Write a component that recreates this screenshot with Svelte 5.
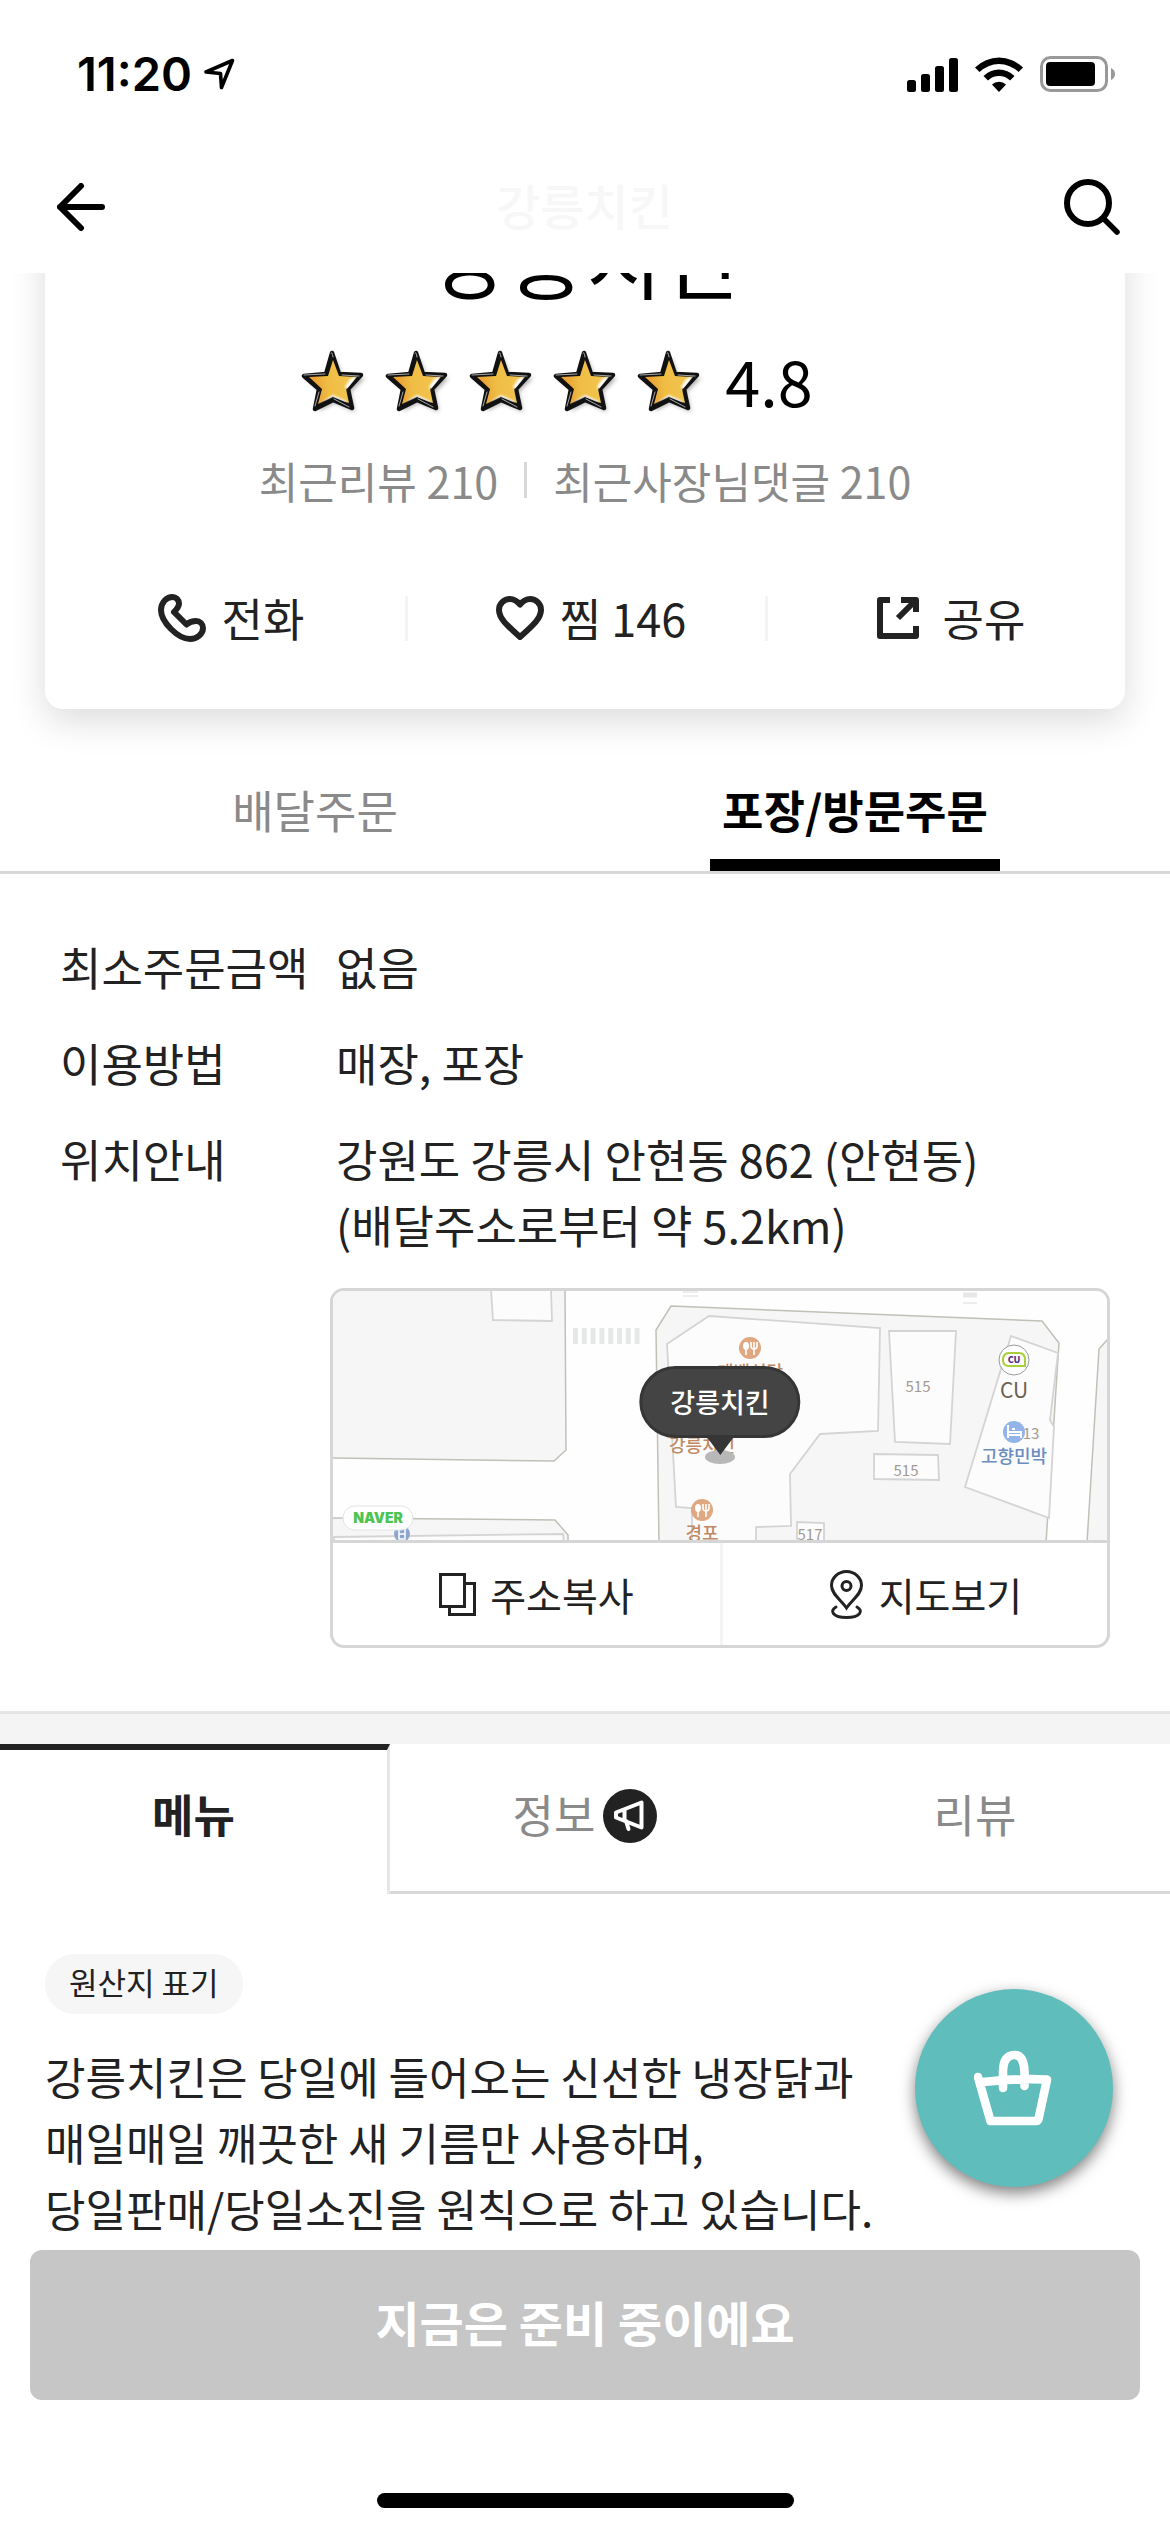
<script>
    const storeName = "강릉치킨";
    const rating = "4.8";

    const orderTabs = ["배달주문", "포장/방문주문"];
    let activeOrder = $state(orderTabs[1]);

    const infoRows = [
        { label: "최소주문금액", lines: ["없음"] },
        { label: "이용방법", lines: ["매장, 포장"] },
        {
            label: "위치안내",
            lines: ["강원도 강릉시 안현동 862 (안현동)", "(배달주소로부터 약 5.2km)"],
        },
    ];

    const pageTabs = [
        { name: "메뉴" },
        { name: "정보", notice: true },
        { name: "리뷰" },
    ];
    let activePage = $state("메뉴");

    const intro = [
        "강릉치킨은 당일에 들어오는 신선한 냉장닭과",
        "매일매일 깨끗한 새 기름만 사용하며,",
        "당일판매/당일소진을 원칙으로 하고 있습니다.",
    ];
</script>

{#snippet food(x, y)}
    <g transform="translate({x} {y})">
        <circle r="11" fill="#dfa880" />
        <ellipse cx="-4" cy="-2" rx="3" ry="4" fill="#fff" />
        <path
            d="M-4 0V7M4 0V7M1 -6V-2Q1 1 4 1Q7 1 7 -2V-6M4 -6V0"
            fill="none"
            stroke="#fff"
            stroke-width="1.6"
        />
    </g>
{/snippet}

<div class="page">
    <header>
        <div class="status">
            <div class="clock">
                <span>11:20</span>
                <svg width="32" height="32" viewBox="0 0 32 32" aria-hidden="true">
                    <path
                        d="M2 14L28.500 2.500L17.500 29.500L16.500 15.500Z"
                        fill="none"
                        stroke="#000"
                        stroke-width="3.600"
                        stroke-linejoin="round"
                    />
                </svg>
            </div>
            <div class="signals">
                <svg width="51" height="36" viewBox="0 0 51 36" aria-hidden="true">
                    <rect x="0" y="24" width="9" height="12" rx="2.500" />
                    <rect x="14" y="18" width="9" height="18" rx="2.500" />
                    <rect x="28" y="10" width="9" height="26" rx="2.500" />
                    <rect x="42" y="2" width="9" height="34" rx="2.500" />
                </svg>
                <svg width="48" height="36" viewBox="0 0 48 36" aria-hidden="true">
                    <path d="M0 11.500A34 34 0 0 1 48 11.500L43.500 16A28 28 0 0 0 4.500 16Z" />
                    <path d="M8.500 20A22 22 0 0 1 39.500 20L35 24.500A16 16 0 0 0 13 24.500Z" />
                    <path d="M17 28.500A10 10 0 0 1 31 28.500L24 36Z" />
                </svg>
                <svg width="75" height="36" viewBox="0 0 75 36" aria-hidden="true">
                    <rect
                        x="1.500"
                        y="1.500"
                        width="65"
                        height="33"
                        rx="9"
                        fill="none"
                        stroke="#999"
                        stroke-width="3"
                    />
                    <rect x="6" y="6" width="49" height="24" rx="4" />
                    <path d="M71 12Q75 14 75 18T71 24Z" fill="#999" />
                </svg>
            </div>
        </div>
        <div class="bar">
            <button aria-label="뒤로">
                <svg width="48" height="48" viewBox="0 0 48 48">
                    <path
                        d="M24 3L3 24L24 45M3 24H45"
                        fill="none"
                        stroke="#000"
                        stroke-width="6"
                        stroke-linecap="round"
                        stroke-linejoin="round"
                    />
                </svg>
            </button>
            <span class="bar-title">{storeName}</span>
            <button aria-label="검색">
                <svg width="56" height="56" viewBox="0 0 56 56">
                    <g fill="none" stroke="#000" stroke-linecap="round">
                        <circle cx="24" cy="24" r="21" stroke-width="6" />
                        <path d="M40 40L53 53" stroke-width="5.500" />
                    </g>
                </svg>
            </button>
        </div>
    </header>

    <main>
        <section class="card">
            <h1>{storeName}</h1>
            <div class="rating">
                {#each [1, 2, 3, 4, 5] as n (n)}
                    <svg width="68" height="68" viewBox="0 0 68 68" aria-hidden="true">
                        <defs>
                            <linearGradient id="gold{n}" x1="0" y1="0.6" x2="1" y2="0.5">
                                <stop offset="0.1" stop-color="#ea9f35" />
                                <stop offset="0.4" stop-color="#efbd44" />
                                <stop offset="1" stop-color="#f3c650" />
                            </linearGradient>
                            <filter id="soft{n}" x="-20%" y="-20%" width="150%" height="150%">
                                <feGaussianBlur stdDeviation="2.200" />
                            </filter>
                            <filter id="shine{n}" x="-50%" y="-50%" width="200%" height="200%">
                                <feGaussianBlur stdDeviation="1.200" />
                            </filter>
                            <clipPath id="face{n}">
                                <path d="M32 10L38 26L57 27L46 40L49 55L32 48L16 56L20 40L6 27L27 26Z" />
                            </clipPath>
                        </defs>
                        <path
                            d="M34 8L41 26L64 29L50 43L54 63L34 54L18 62L21 43L6 30L28 27Z"
                            fill="#777"
                            opacity="0.6"
                            filter="url(#soft{n})"
                        />
                        <path
                            d="M31 4L38 25L60 26L47 40L51 59L32 51L14 60L18 40L3 27L25 25Z"
                            fill="#111"
                            stroke="#111"
                            stroke-width="4.500"
                            stroke-linejoin="round"
                        />
                        <path
                            d="M32 11L38 27L55 28L45 40L48 54L32 47L17 55L21 40L8 28L27 27Z"
                            fill="url(#gold{n})"
                        />
                        <g clip-path="url(#face{n})">
                            <path
                                d="M57 27L49 30L44 38L47 41ZM32 46L26 50L18 56L32 51L47 57L45 52Z"
                                fill="#fff"
                                filter="url(#shine{n})"
                            />
                        </g>
                        <path
                            d="M30 4Q31 2 32 8M3 26L24 25M41 26L58 27M18 43L14 57M33 50L48 58"
                            fill="none"
                            stroke="#ccc"
                            stroke-width="0.800"
                            stroke-linecap="round"
                        />
                    </svg>
                {/each}
                <span>{rating}</span>
            </div>
            <div class="reviews">
                <span>최근리뷰 210</span>
                <i></i>
                <span>최근사장님댓글 210</span>
            </div>
            <div class="actions">
                <button>
                    <svg width="48" height="48" viewBox="0 0 48 48" aria-hidden="true">
                        <path
                            d="M16 18C19 15 21 12.500 21 9.500C21 6 18 3 14.500 3C8 3 3 9 3 16C3 28 20 45 32 45C39 45 45 40 45 34C45 30 42 27 38 27C34 27 32 27.500 28.500 30.500Z"
                        />
                    </svg>
                    전화
                </button>
                <button>
                    <svg width="48" height="44" viewBox="0 0 48 44" aria-hidden="true">
                        <path
                            d="M24 8.500C21 5 17 3 14 3C8 3 3 7.500 3 14C3 22 10 28.500 24 41C38 28.500 45 22 45 14C45 7.500 40 3 34 3C31 3 27 5 24 8.500Z"
                        />
                    </svg>
                    찜 146
                </button>
                <button>
                    <svg width="42" height="42" viewBox="0 0 42 42" aria-hidden="true">
                        <path d="M13 3H3V39H39V29M24 3H39V15M38 4L21 21" />
                    </svg>
                    <span>공유</span>
                </button>
            </div>
        </section>

        <nav class="order-tabs">
            {#each orderTabs as tab}
                <button class:active={activeOrder === tab} onclick={() => (activeOrder = tab)}>
                    <span>{tab}</span>
                </button>
            {/each}
        </nav>

        <section class="info">
            <dl>
                {#each infoRows as row}
                    <div>
                        <dt>{row.label}</dt>
                        <dd>
                            {#each row.lines as line}
                                <p>{line}</p>
                            {/each}
                        </dd>
                    </div>
                {/each}
            </dl>

            <div class="map-card">
                <div class="map">
                    <svg viewBox="0 0 774 249" preserveAspectRatio="xMidYMid slice" aria-hidden="true">
                        <rect width="774" height="249" fill="#fefefe" />
                        <!-- blocks -->
                        <g fill="#f6f6f6" stroke="#c0c0b8" stroke-width="1.500">
                            <path d="M-2 -2H232L233 159L221 170L-2 167Z" />
                            <path d="M338 15L709 30L726 52L713 252H326L323 39Z" />
                            <path d="M776 47L766 58L754 252H776Z" />
                            <path d="M-2 227L222 229L235 244V252H-2Z" />
                        </g>
                        <!-- buildings -->
                        <g fill="#fcfcfc" stroke="#d4d4d4" stroke-width="1.800">
                            <path d="M158 -2L160 29L219 30L218 -2Z" />
                            <path
                                d="M376 25L547 37L545 140L487 143L457 183L458 235L423 236V252H359V217L343 216L334 53Z"
                            />
                            <path d="M556 40L623 40L617 153L562 151Z" />
                            <path d="M541 163L605 164L606 189L541 188Z" />
                            <path d="M464 252V231L491 232V252Z" />
                            <path d="M678 45L725 62L717 129L721 136L716 227L632 196Z" />
                            <path d="M1 252V246L230 243L231 252" />
                        </g>
                        <!-- crosswalks -->
                        <g fill="none" stroke="#e6e8e8">
                            <path d="M240 45H308" stroke-width="16" stroke-dasharray="5 3.800" />
                            <path d="M350 1H365M350 5H365M630 12H644" stroke-width="1.500" />
                            <path d="M630 4H644" stroke-width="5" />
                        </g>
                        {@render food(417, 57)}
                        {@render food(369, 219)}
                        <g font-size="18" font-weight="500" fill="#c08a66" text-anchor="middle">
                            <text x="417" y="88">태백식당</text>
                            <text x="369" y="161">강릉치킨</text>
                            <text x="369" y="249">경포</text>
                            <text x="681" y="172" fill="#6b8dc0">고향민박</text>
                        </g>
                        <g font-size="15" fill="#a39a92" text-anchor="middle">
                            <text x="585" y="101">515</text>
                            <text x="573" y="185">515</text>
                            <text x="477" y="249">517</text>
                            <text x="698" y="148">13</text>
                        </g>
                        <circle cx="681" cy="69" r="15" fill="#fff" stroke="#999" />
                        <path
                            d="M676 62H686Q692 62 692 69V75H676Q670 75 670 69Q670 62 676 62Z"
                            fill="#fff"
                            stroke="#a9cf3c"
                            stroke-width="2"
                        />
                        <text x="681" y="72" font-size="9" font-weight="900" fill="#59318a" text-anchor="middle">
                            CU
                        </text>
                        <text x="681" y="107" font-size="21" fill="#6b6150" text-anchor="middle">CU</text>
                        <circle cx="681" cy="141" r="11" fill="#93b4ea" />
                        <path
                            d="M675 134V147M675 144H688V147M675 141H688V144M679 138H682"
                            fill="none"
                            stroke="#fff"
                            stroke-width="2"
                        />
                        <circle cx="69" cy="243" r="8" fill="#8fa6cf" />
                        <path
                            d="M66 238H72V248H66ZM66 243H72"
                            fill="none"
                            stroke="#fff"
                            stroke-width="1.500"
                        />
                        <rect x="10" y="215" width="70" height="24" rx="12" fill="#fff" stroke="#e0e5e2" />
                        <text
                            x="45"
                            y="232"
                            font-size="14"
                            font-weight="900"
                            font-family="Inter, sans-serif"
                            fill="#4bc452"
                            text-anchor="middle">NAVER</text
                        >
                        <ellipse cx="387" cy="166" rx="15" ry="7" fill="#b8b8b8" />
                    </svg>
                    <span class="marker">{storeName}</span>
                </div>
                <div class="map-buttons">
                    <button>
                        <svg width="37" height="43" viewBox="0 0 37 43" aria-hidden="true">
                            <path d="M1.500 1.500H25.500V33.500H1.500ZM25.500 10.500H35.500V41.500H10.500V33.500" />
                        </svg>
                        주소복사
                    </button>
                    <button>
                        <svg width="37" height="49" viewBox="-2 0 37 49" aria-hidden="true">
                            <path
                                d="M16.500 38C11 30 1.500 24 1.500 15.500A15 14 0 0 1 31.500 15.500C31.500 24 22 30 16.500 38Z"
                            />
                            <circle cx="16.500" cy="16" r="4.500" />
                            <path d="M6 37C-1 41 3 47.500 16.500 47.500S34 41 27 37" stroke-linecap="round" />
                        </svg>
                        지도보기
                    </button>
                </div>
            </div>
        </section>

        <nav class="page-tabs">
            {#each pageTabs as tab}
                <button class:active={activePage === tab.name} onclick={() => (activePage = tab.name)}>
                    <span>{tab.name}</span>
                    {#if tab.notice}
                        <svg width="54" height="54" viewBox="0 0 54 54" aria-hidden="true">
                            <circle cx="27" cy="27" r="27" fill="#222" />
                            <path
                                d="M38.500 13.500V38.500L13 28.500V23.500ZM21.500 21V31M23 32L25.500 40"
                                fill="none"
                                stroke="#fff"
                                stroke-width="4"
                                stroke-linecap="round"
                                stroke-linejoin="round"
                            />
                        </svg>
                    {/if}
                </button>
            {/each}
        </nav>

        <section class="menu">
            <button class="origin">원산지 표기</button>
            <div class="intro">
                {#each intro as line}
                    <p>{line}</p>
                {/each}
            </div>
        </section>
    </main>

    <button class="basket" aria-label="장바구니">
        <svg width="80" height="80" viewBox="59 59 80 80">
            <path
                d="M63 88L75.500 132H121Q123 132 123.500 130L132 90.500Q100 89 68 93M88 99V83Q88 66 99.500 66Q109 66 109.500 83V97"
                fill="none"
                stroke="#fff"
                stroke-width="8.600"
                stroke-linecap="round"
                stroke-linejoin="round"
            />
        </svg>
    </button>

    <footer>
        <button disabled>지금은 준비 중이에요</button>
        <div class="home"></div>
    </footer>
</div>

<style>
    :global(body) {
        margin: 0;
        background: #fff;
    }

    .page {
        display: flex;
        flex-direction: column;
        min-height: 100vh;
        font-family: "Noto Sans CJK KR", sans-serif;
        font-size: 45px;
        line-height: 66px;
        color: #222;
    }

    .page :global(*) {
        box-sizing: border-box;
    }

    button {
        margin: 0;
        padding: 0;
        border: none;
        background: none;
        font: inherit;
        color: inherit;
        cursor: pointer;
    }

    svg {
        display: block;
        flex-shrink: 0;
    }

    p {
        margin: 0;
    }

    header {
        position: sticky;
        top: 0;
        z-index: 2;
        padding-bottom: 3px;
        background: #fff;
        color: #000;
    }

    .status {
        display: flex;
        align-items: center;
        justify-content: space-between;
        height: 144px;
        padding: 4px 55px 0 77px;
    }

    .clock {
        display: flex;
        align-items: center;
        gap: 12px;
        font-family: Inter, sans-serif;
        font-size: 47px;
        font-weight: 600;
    }

    .signals {
        display: flex;
        align-items: center;
        gap: 17px;
    }

    .bar {
        display: flex;
        align-items: center;
        justify-content: space-between;
        height: 126px;
        padding: 0 50px 0 57px;
    }

    .bar-title {
        padding-bottom: 6px;
        font-size: 48px;
        font-weight: 500;
        color: #f7f7f7;
    }

    /* the card is scrolled partly under the header */
    .card {
        margin: -84px 45px 0;
        padding: 18px 0 58px;
        border-radius: 18px;
        background: #fff;
        box-shadow: 0 12px 36px rgba(0, 0, 0, 0.14);
    }

    h1 {
        margin: 0;
        font-size: 84px;
        font-weight: 400;
        line-height: 100px;
        text-align: center;
        color: #000;
    }

    .rating {
        display: flex;
        align-items: center;
        justify-content: center;
        gap: 16px;
        height: 75px;
        margin-top: 38px;
        padding-right: 56px;
        font-size: 63px;
        color: #000;
    }

    .rating span {
        margin-left: 4px;
        padding-bottom: 6px;
    }

    .reviews {
        display: flex;
        align-items: center;
        justify-content: center;
        gap: 26px;
        margin-top: 27px;
        font-size: 43px;
        color: #8a8a8a;
    }

    .reviews i {
        width: 3px;
        height: 36px;
        background: #d8d8d8;
    }

    .actions {
        display: grid;
        grid-template-columns: repeat(3, 1fr);
        margin-top: 72px;
    }

    .actions button {
        display: flex;
        align-items: center;
        justify-content: center;
        gap: 16px;
        padding-left: 12px;
    }

    .actions button + button {
        background: linear-gradient(#f4f4f4, #f4f4f4) left center / 3px 45px no-repeat;
    }

    .actions button span {
        margin-left: 8px;
    }

    .actions path {
        fill: none;
        stroke: #222;
        stroke-width: 6;
        stroke-linejoin: round;
    }

    .order-tabs {
        display: grid;
        grid-template-columns: 1fr 1fr;
        margin-top: 58px;
        padding: 0 45px;
        border-bottom: 3px solid #d8d8d8;
    }

    .order-tabs button {
        display: flex;
        justify-content: center;
        color: #8a8a8a;
    }

    .order-tabs span {
        padding: 10px 12px 28px;
    }

    .order-tabs .active {
        font-weight: 700;
        color: #000;
    }

    .order-tabs .active span {
        padding-bottom: 16px;
        border-bottom: 12px solid #000;
    }

    .info {
        padding: 60px 60px 66px;
    }

    dl {
        display: flex;
        flex-direction: column;
        gap: 30px;
        margin: 0;
    }

    dl div {
        display: grid;
        grid-template-columns: 276px 1fr;
    }

    dd {
        margin: 0;
    }

    .map-card {
        margin: 30px 0 0 270px;
        border: 3px solid #d6d6d6;
        border-radius: 14px;
        overflow: hidden;
    }

    .map {
        position: relative;
        border-bottom: 3px solid #d6d6d6;
    }

    .map svg {
        width: 100%;
        height: 249px;
    }

    .marker {
        position: absolute;
        top: 75px;
        left: 50%;
        padding: 0 28px;
        border: 3px solid #363636;
        border-radius: 36px;
        background: #444;
        font-size: 27px;
        font-weight: 500;
        color: #fff;
        transform: translateX(-50%);
    }

    .marker::after {
        content: "";
        position: absolute;
        top: 100%;
        left: 50%;
        border: 15px solid transparent;
        border-top: 20px solid #363636;
        border-bottom: none;
        transform: translateX(-50%);
    }

    .map-buttons {
        display: grid;
        grid-template-columns: 1fr 1fr;
    }

    .map-buttons button {
        display: flex;
        align-items: center;
        justify-content: center;
        gap: 14px;
        height: 102px;
        padding-left: 20px;
        font-size: 39px;
    }

    .map-buttons button + button {
        border-left: 3px solid #f4f4f4;
    }

    .map-buttons svg {
        fill: none;
        stroke: #222;
        stroke-width: 3;
    }

    .page-tabs {
        display: grid;
        grid-template-columns: repeat(3, 1fr);
        border-top: 30px solid #f4f4f4;
        box-shadow: 0 -3px 0 #e5e5e5;
    }

    .page-tabs button {
        display: flex;
        align-items: center;
        justify-content: center;
        gap: 8px;
        height: 150px;
        padding-bottom: 4px;
        border-bottom: 3px solid #d8d8d8;
        color: #8a8a8a;
    }

    .page-tabs span {
        padding-bottom: 4px;
    }

    .page-tabs .active {
        padding-bottom: 13px;
        border-top: 6px solid #222;
        border-right: 3px solid #e6e6e6;
        border-bottom: none;
        font-weight: 700;
        color: #222;
    }

    .menu {
        padding: 60px 45px 9px;
    }

    .origin {
        display: block;
        padding: 0 24px 4px;
        border-radius: 30px;
        background: #f6f6f6;
        font-size: 31px;
        line-height: 56px;
    }

    .intro {
        margin-top: 29px;
        font-size: 44px;
    }

    .basket {
        position: fixed;
        right: 57px;
        bottom: 345px;
        z-index: 3;
        display: flex;
        align-items: center;
        justify-content: center;
        width: 198px;
        height: 198px;
        border-radius: 50%;
        background: #5fbdbc;
        box-shadow: 0 6px 15px rgba(0, 0, 0, 0.5);
    }

    footer {
        position: sticky;
        bottom: 0;
        z-index: 2;
        margin-top: auto;
        padding: 0 30px 24px;
        background: #fff;
    }

    footer button {
        display: block;
        width: 100%;
        height: 150px;
        padding-bottom: 8px;
        border-radius: 12px;
        background: #c6c6c6;
        font-size: 48px;
        font-weight: 700;
        color: #fff;
    }

    .home {
        width: 417px;
        height: 15px;
        margin: 93px auto 0;
        border-radius: 8px;
        background: #000;
    }
</style>
